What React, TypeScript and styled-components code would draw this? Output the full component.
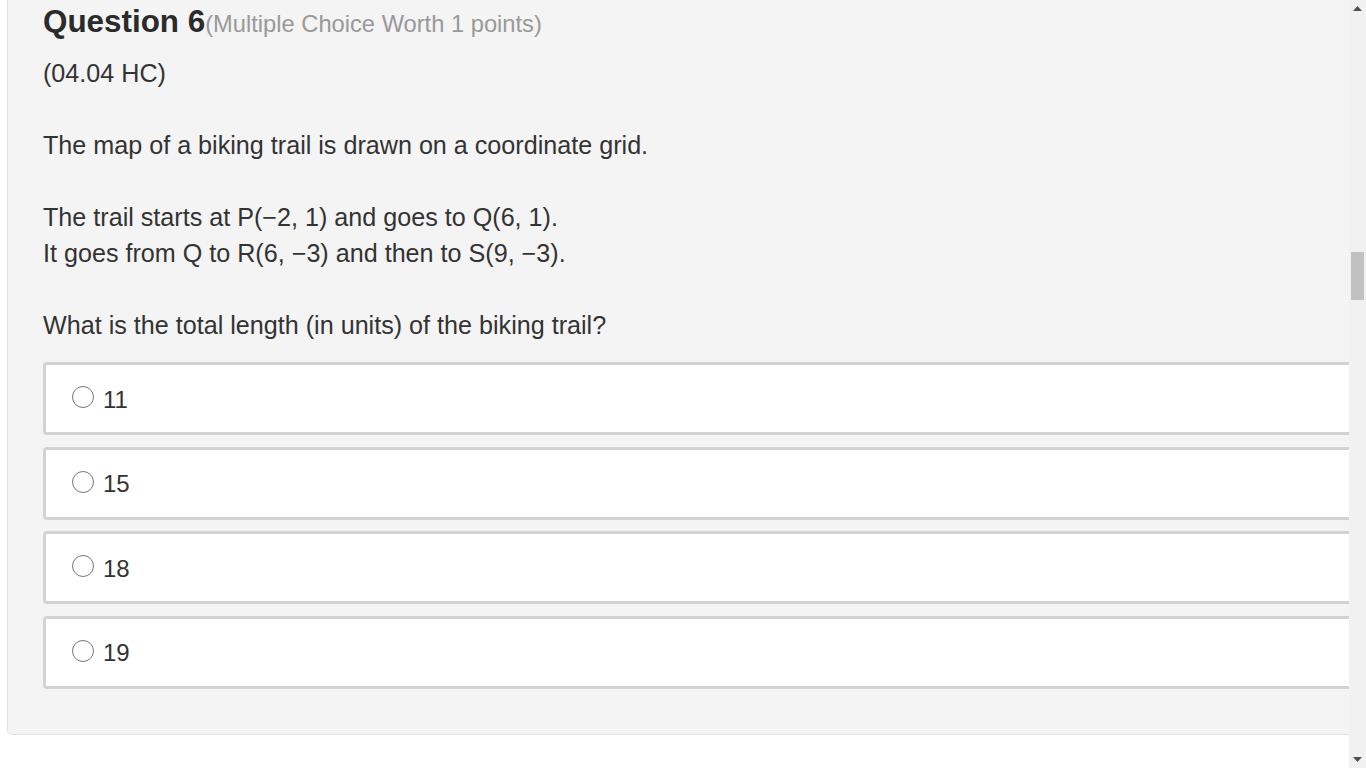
import React from "react";
import styled, { createGlobalStyle } from "styled-components";

const Global = createGlobalStyle`
  html, body { margin: 0; padding: 0; background: #ffffff; }
  body { font-family: "Liberation Sans", Arial, sans-serif; color: #333333; }
`;

const Screen = styled.div`
  display: flex;
  width: 1366px;
  height: 768px;
  overflow: hidden;
`;

const Viewport = styled.div`
  flex: 1;
  min-width: 0;
  height: 768px;
  overflow: hidden;
`;

const Panel = styled.section`
  margin-left: 7px;
  width: calc(100% + 40px);
  box-sizing: border-box;
  background: #f4f4f4;
  border: 1px solid #e2e2e2;
  border-top: none;
  border-radius: 0 0 5px 5px;
  padding: 4px 0 45px 35px;
`;

const Title = styled.h2`
  margin: 0 0 13px;
  font-size: 31.4px;
  line-height: 36px;
  font-weight: 700;
  color: #2b2b2b;
`;

const Worth = styled.span`
  font-size: 23.7px;
  font-weight: 400;
  color: #999999;
`;

const Para = styled.p`
  margin: 0 0 36px;
  font-size: 25.15px;
  line-height: 36px;
  color: #333333;
  &:last-of-type { margin-bottom: 0; }
`;

const Options = styled.div`
  margin-top: 19px;
  display: flex;
  flex-direction: column;
  gap: 11.5px;
`;

const Option = styled.label`
  display: flex;
  align-items: center;
  height: 73px;
  box-sizing: border-box;
  background: #ffffff;
  border: 3px solid #d3d3d3;
  border-radius: 4px;
  padding-left: 26px;
  padding-top: 2px;
  cursor: pointer;
`;

const Radio = styled.span`
  width: 22px;
  height: 22px;
  box-sizing: border-box;
  border: 1.5px solid #767676;
  border-radius: 50%;
  background: #ffffff;
  margin-right: 9px;
  margin-top: -5px;
`;

const OptionText = styled.span`
  font-size: 24px;
  line-height: 30px;
  color: #333333;
`;

const Scrollbar = styled.div`
  width: 17px;
  height: 768px;
  background: #f1f1f1;
  display: flex;
  flex-direction: column;
`;

const Arrow = styled.div`
  height: 17px;
  display: flex;
  align-items: center;
  justify-content: center;
`;

const Track = styled.div`
  flex: 1;
  padding-top: 235px;
`;

const Thumb = styled.div`
  margin: 0 2px;
  height: 48px;
  background: #c1c1c1;
`;

const choices = ["11", "15", "18", "19"];

export default function App() {
  return (
    <>
      <Global />
      <Screen>
        <Viewport>
          <Panel>
            <Title>
              Question 6<Worth>(Multiple Choice Worth 1 points)</Worth>
            </Title>
            <Para>(04.04 HC)</Para>
            <Para>The map of a biking trail is drawn on a coordinate grid.</Para>
            <Para>
              The trail starts at P(−2, 1) and goes to Q(6, 1).
              <br />
              It goes from Q to R(6, −3) and then to S(9, −3).
            </Para>
            <Para>What is the total length (in units) of the biking trail?</Para>
            <Options>
              {choices.map((c) => (
                <Option key={c}>
                  <Radio />
                  <OptionText>{c}</OptionText>
                </Option>
              ))}
            </Options>
          </Panel>
        </Viewport>
        <Scrollbar>
          <Arrow>
            <svg width="9" height="5" viewBox="0 0 9 5">
              <path d="M0 5 L4.5 0 L9 5 Z" fill="#505050" />
            </svg>
          </Arrow>
          <Track>
            <Thumb />
          </Track>
          <Arrow>
            <svg width="9" height="5" viewBox="0 0 9 5">
              <path d="M0 0 L4.5 5 L9 0 Z" fill="#505050" />
            </svg>
          </Arrow>
        </Scrollbar>
      </Screen>
    </>
  );
}
